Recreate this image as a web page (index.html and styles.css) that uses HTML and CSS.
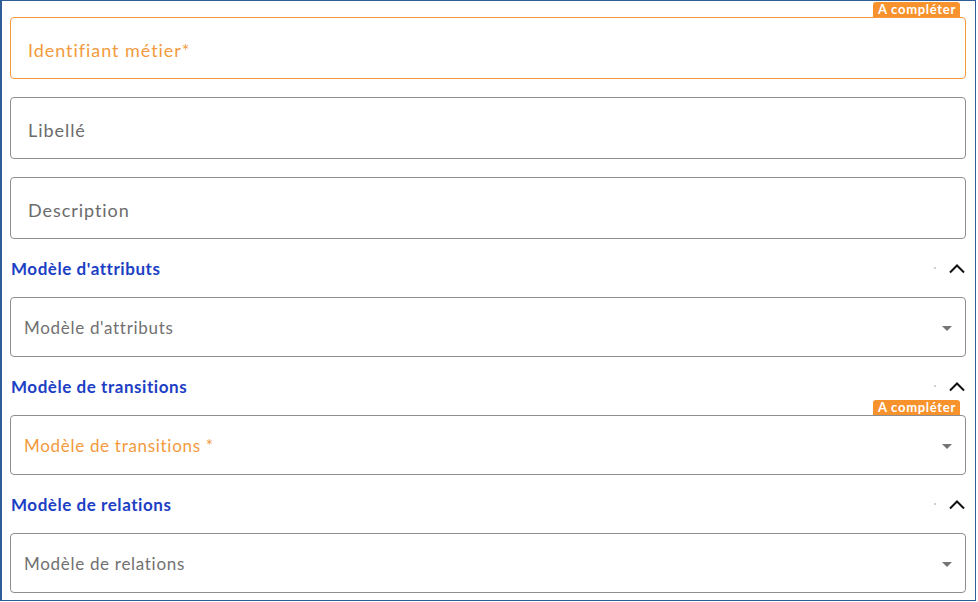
FILE: index.html
```html
<!DOCTYPE html>
<html lang="fr">
<head>
<meta charset="utf-8">
<link rel="stylesheet" href="styles.css">
</head>
<body>
<div class="frame">
  <div class="field required">
    <span class="badge">A compléter</span>
    <span class="label">Identifiant métier*</span>
  </div>
  <div class="field">
    <span class="label">Libellé</span>
  </div>
  <div class="field">
    <span class="label">Description</span>
  </div>

  <div class="section-head">
    <span class="section-title">Modèle d'attributs</span>
    <span class="dot"></span>
    <svg class="chevron" width="18" height="11" viewBox="0 0 18 11"><path d="M2 9.5 L9 2.5 L16 9.5" fill="none" stroke="#111" stroke-width="2"/></svg>
  </div>
  <div class="select">
    <span class="placeholder">Modèle d'attributs</span>
    <span class="arrow"></span>
  </div>

  <div class="section-head">
    <span class="section-title">Modèle de transitions</span>
    <span class="dot"></span>
    <svg class="chevron" width="18" height="11" viewBox="0 0 18 11"><path d="M2 9.5 L9 2.5 L16 9.5" fill="none" stroke="#111" stroke-width="2"/></svg>
  </div>
  <div class="select required">
    <span class="badge">A compléter</span>
    <span class="placeholder">Modèle de transitions *</span>
    <span class="arrow"></span>
  </div>

  <div class="section-head">
    <span class="section-title">Modèle de relations</span>
    <span class="dot"></span>
    <svg class="chevron" width="18" height="11" viewBox="0 0 18 11"><path d="M2 9.5 L9 2.5 L16 9.5" fill="none" stroke="#111" stroke-width="2"/></svg>
  </div>
  <div class="select">
    <span class="placeholder">Modèle de relations</span>
    <span class="arrow"></span>
  </div>
</div>
</body>
</html>
```
FILE: styles.css
```css
html, body {
  margin: 0;
  padding: 0;
  background: #fff;
}
body {
  font-family: "Lato", "Noto Sans", sans-serif;
}
.frame {
  box-sizing: border-box;
  width: 976px;
  height: 601px;
  border: 1px solid #2e5e97;
  border-left-width: 2px;
  padding: 16px 9px 0 8px;
  display: flex;
  flex-direction: column;
}
.field {
  position: relative;
  box-sizing: border-box;
  height: 62px;
  border: 1px solid #8e8e8e;
  border-radius: 4px;
  display: flex;
  align-items: center;
  padding: 3px 17px 0 17px;
  margin-bottom: 18px;
}
.field:nth-child(3) { margin-bottom: 0; }
.label {
  font-size: 18px;
  color: #6b6b6b;
  letter-spacing: 0.95px;
}
.required {
  border-color: #f29a3d;
}
.required .label,
.required .placeholder {
  color: #f29a3d;
}
.badge {
  position: absolute;
  top: -16px;
  right: 5px;
  height: 15px;
  line-height: 15px;
  padding: 0 4px 0 5px;
  background: #f7922d;
  color: #fff;
  font-size: 13px;
  font-weight: 700;
  letter-spacing: 0.7px;
  border-radius: 3px 3px 0 0;
}
.section-head {
  height: 36px;
  margin: 11px 0 11px;
  display: flex;
  align-items: center;
  padding-left: 1px;
}
.section-head:nth-of-type(1) { margin-top: 10px; }
.section-title {
  flex: 1;
  font-size: 17px;
  font-weight: 700;
  color: #1c40c4;
  letter-spacing: 0.55px;
}
.dot {
  width: 2px;
  height: 2px;
  background: #d0d0d0;
  margin-right: 12px;
}
.chevron {
  display: block;
}
.select {
  position: relative;
  box-sizing: border-box;
  height: 60px;
  border: 1px solid #8e8e8e;
  border-radius: 4px;
  display: flex;
  align-items: center;
  padding: 0 13px;
}
.placeholder {
  flex: 1;
  font-size: 17px;
  color: #717171;
  letter-spacing: 0.7px;
}
.arrow {
  width: 0;
  height: 0;
  border-left: 5px solid transparent;
  border-right: 5px solid transparent;
  border-top: 5px solid #757575;
  margin-top: 2px;
}
```
